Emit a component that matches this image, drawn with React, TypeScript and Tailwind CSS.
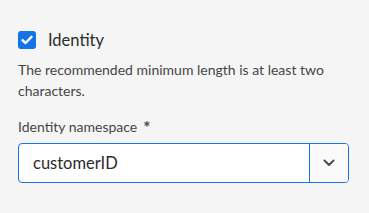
import { useState } from 'react'

export default function App() {
  const [checked, setChecked] = useState(true)

  return (
    <div className="w-[369px] h-[213px] bg-[#f5f5f5] px-[18px] pt-[31px] font-['Lato',sans-serif]">
      {/* Checkbox row */}
      <label className="flex items-center gap-3 cursor-pointer">
        <button
          type="button"
          onClick={() => setChecked(!checked)}
          className="w-[18px] h-[18px] rounded-[3px] bg-[#1473e6] flex items-center justify-center"
        >
          {checked && (
            <svg width="12" height="10" viewBox="0 0 12 10">
              <path d="M1.5 5.2 L4.5 8 L10.5 1.8" fill="none" stroke="white" strokeWidth="2.4" strokeLinecap="round" strokeLinejoin="round" />
            </svg>
          )}
        </button>
        <span className="text-[16.5px] text-[#2c2c2c] leading-[18px]">Identity</span>
      </label>

      {/* Help text */}
      <p className="mt-[10px] text-[14px] leading-[21px] text-[#464646]">
        The recommended minimum length is at least two characters.
      </p>

      {/* Field label */}
      <div className="mt-[15px] text-[14px] leading-[18px] text-[#464646] flex items-center gap-[6px]">
        Identity namespace
        <span className="text-[17px] font-bold text-[#4b4b4b] leading-[18px] mt-[3px]">*</span>
      </div>

      {/* Picker */}
      <div className="mt-[6px] flex h-[40px] w-[331px] rounded-[4px] border border-[#1473e6] bg-white overflow-hidden">
        <div className="flex-1 flex items-center pl-[14px] text-[16.5px] text-[#2c2c2c]">customerID</div>
        <button type="button" className="w-[39px] border-l border-[#1473e6] bg-[#fafafa] flex items-center justify-center">
          <svg width="12" height="8" viewBox="0 0 12 8">
            <path d="M1.5 1.5 L6 6 L10.5 1.5" fill="none" stroke="#4b4b4b" strokeWidth="2" strokeLinecap="round" strokeLinejoin="round" />
          </svg>
        </button>
      </div>
    </div>
  )
}
